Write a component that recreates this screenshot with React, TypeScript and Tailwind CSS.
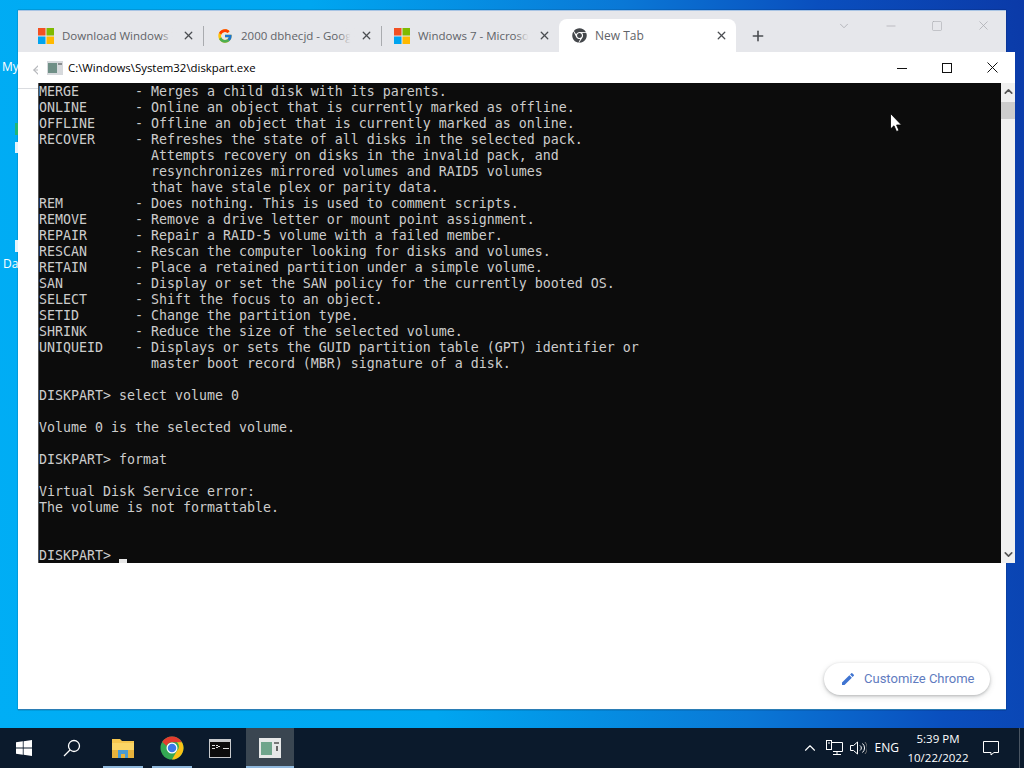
import { FcGoogle } from 'react-icons/fc'
import { FaChrome } from 'react-icons/fa'
import { MdEdit } from 'react-icons/md'
import { X, Plus, ChevronDown, Minus, Square, ChevronUp, ArrowLeft } from 'lucide-react'

const consoleLines = [
  'MERGE       - Merges a child disk with its parents.',
  'ONLINE      - Online an object that is currently marked as offline.',
  'OFFLINE     - Offline an object that is currently marked as online.',
  'RECOVER     - Refreshes the state of all disks in the selected pack.',
  '              Attempts recovery on disks in the invalid pack, and',
  '              resynchronizes mirrored volumes and RAID5 volumes',
  '              that have stale plex or parity data.',
  'REM         - Does nothing. This is used to comment scripts.',
  'REMOVE      - Remove a drive letter or mount point assignment.',
  'REPAIR      - Repair a RAID-5 volume with a failed member.',
  'RESCAN      - Rescan the computer looking for disks and volumes.',
  'RETAIN      - Place a retained partition under a simple volume.',
  'SAN         - Display or set the SAN policy for the currently booted OS.',
  'SELECT      - Shift the focus to an object.',
  'SETID       - Change the partition type.',
  'SHRINK      - Reduce the size of the selected volume.',
  'UNIQUEID    - Displays or sets the GUID partition table (GPT) identifier or',
  '              master boot record (MBR) signature of a disk.',
  '',
  'DISKPART> select volume 0',
  '',
  'Volume 0 is the selected volume.',
  '',
  'DISKPART> format',
  '',
  'Virtual Disk Service error:',
  'The volume is not formattable.',
  '',
  '',
]

function MsLogo() {
  return (
    <svg width="16" height="16" viewBox="0 0 16 16" className="shrink-0">
      <rect width="7.500" height="7.500" fill="#f25022" />
      <rect x="8.500" width="7.500" height="7.500" fill="#7fba00" />
      <rect y="8.500" width="7.500" height="7.500" fill="#00a4ef" />
      <rect x="8.500" y="8.500" width="7.500" height="7.500" fill="#ffb900" />
    </svg>
  )
}

function ChromeLogo({ size }: { size: number }) {
  return (
    <svg width={size} height={size} viewBox="0 0 48 48">
      <circle cx="24" cy="24" r="23" fill="#34a853" />
      <path d="M24 1a23 23 0 0 1 19.900 11.500H24a11.500 11.500 0 0 0-10.800 7.500L4.500 12A23 23 0 0 1 24 1z" fill="#e33b2e" />
      <path d="M43.900 12.500A23 23 0 0 1 24 47l10-17.300a11.500 11.500 0 0 0 0-17.200z" fill="#fbc116" />
      <circle cx="24" cy="24" r="11" fill="#fff" />
      <circle cx="24" cy="24" r="8.500" fill="#3b78e7" />
    </svg>
  )
}

function Tab({ icon, title, className, active }: { icon: React.ReactNode; title: string; className: string; active?: boolean }) {
  return (
    <div className={`relative flex h-[33px] items-center pr-[8px] ${className} ${active ? 'rounded-t-[8px] bg-white' : ''}`}>
      <span className="flex w-[16px] shrink-0 items-center justify-center">{icon}</span>
      <span className={`relative ml-[8px] min-w-0 flex-1 overflow-hidden whitespace-nowrap text-[#5f6368] ${active ? 'text-[12px]' : 'text-[11.500px]'}`}>
        {title}
        {!active && <span className="absolute inset-y-0 right-0 w-[18px] bg-gradient-to-r from-transparent to-[#e6e7eb] to-70%" />}
      </span>
      <X size={13} strokeWidth={2.4} className="ml-[4px] shrink-0 text-[#4a4d51]" />
    </div>
  )
}

function Separator() {
  return <div className="h-[20px] w-px shrink-0 bg-[#a9abaf]" />
}

function ChromeWindow() {
  return (
    <div className="flex h-[700px] w-[988px] flex-col border-y border-t-[#a8c4e4] border-b-[#2b7db5] bg-white font-['Open_Sans',sans-serif] shadow-[0_0_1px_rgba(0,0,0,0.6)]">
      <div className="relative flex h-[41px] shrink-0 items-end bg-[#e6e7eb] pl-[18px]">
        <div className="flex h-[33px] items-center">
          <Tab icon={<MsLogo />} title="Download Windows 7" className="w-[167px] pl-[2px]" />
          <Separator />
          <Tab icon={<FcGoogle size={16} />} title="2000 dbhecjd - Google" className="w-[177px] pl-[13px]" />
          <Separator />
          <Tab icon={<MsLogo />} title="Windows 7 - Microsoft" className="w-[177px] pl-[12px]" />
          <Tab icon={<FaChrome size={15} className="text-[#44474b]" />} title="New Tab" className="w-[177px] pl-[12px]" active />
          <Plus size={16} strokeWidth={2.4} className="ml-[14px] text-[#4a4d51]" />
        </div>
        <div className="absolute right-[15px] top-[7px] flex items-center gap-[33px] text-[#a9abb0]">
          <ChevronDown size={14} strokeWidth={1.4} />
          <Minus size={14} strokeWidth={1.2} />
          <Square size={12} strokeWidth={1.2} />
          <X size={15} strokeWidth={1.2} />
        </div>
      </div>
      <div className="flex h-[37px] shrink-0 items-center border-b border-[#dadce0] pl-[13px]">
        <ArrowLeft size={14} className="text-[#b6b8bc]" />
      </div>
      <div className="flex flex-1 items-end justify-end pb-[14px] pr-[16px]">
        <div className="flex h-[32px] w-[166px] items-center gap-[8px] rounded-full bg-white pl-[16px] shadow-[0_1px_3px_rgba(60,64,67,0.3),0_2px_6px_rgba(60,64,67,0.15)]">
          <MdEdit size={16} className="text-[#3f74d1]" />
          <span className="font-['Roboto',sans-serif] text-[13px] text-[#5f7cbf]">Customize Chrome</span>
        </div>
      </div>
    </div>
  )
}

function ConsoleWindow() {
  return (
    <div className="absolute left-[38px] top-[52px] flex h-[511px] w-[977px] flex-col bg-white">
      <div className="flex h-[31px] shrink-0 items-center pl-[9px]">
        <svg width="16" height="16" viewBox="0 0 16 16">
          <rect x="0" y="1" width="16" height="14" fill="#d6d9dc" />
          <rect x="1" y="3" width="9" height="10" fill="#6f8f86" />
          <rect x="11" y="3" width="4" height="2" fill="#8a8d90" />
        </svg>
        <span className="ml-[5px] font-['Open_Sans',sans-serif] text-[11.400px] text-black">C:\Windows\System32\diskpart.exe</span>
        <div className="ml-auto flex items-center gap-[35px] pr-[17px]">
          <svg width="10" height="10" viewBox="0 0 10 10"><path d="M0 5.500H10" stroke="#111" /></svg>
          <svg width="10" height="10" viewBox="0 0 10 10"><rect x=".5" y=".5" width="9" height="9" fill="none" stroke="#111" /></svg>
          <svg width="11" height="11" viewBox="0 0 11 11"><path d="M.5.500l10 10M10.500.500l-10 10" stroke="#111" /></svg>
        </div>
      </div>
      <div className="flex min-h-0 flex-1 border-l border-[#555]">
        <div className="flex-1 overflow-hidden bg-[#0c0c0c] pt-[1px] font-['DejaVu_Sans_Mono',monospace] text-[13.290px] leading-[16px] text-[#cccccc]">
          {consoleLines.map((line, i) => (
            <div key={i} className="h-[16px] whitespace-pre">{line}</div>
          ))}
          <div className="relative h-[16px] whitespace-pre">
            DISKPART&gt; <span className="absolute left-[80px] top-[11px] h-[4px] w-[8px] bg-[#e8e8e8]" />
          </div>
        </div>
        <div className="flex w-[14px] shrink-0 flex-col items-center bg-[#f0f0f0]">
          <ChevronUp size={13} strokeWidth={3} className="mt-[2px] text-[#555]" />
          <div className="mt-[4px] h-[17px] w-full bg-[#cdcdcd]" />
          <ChevronDown size={13} strokeWidth={3} className="mb-[2px] mt-auto text-[#555]" />
        </div>
      </div>
    </div>
  )
}

function TaskIcon({ children, running, active, className = '' }: { children: React.ReactNode; running?: boolean; active?: boolean; className?: string }) {
  return (
    <div className={`relative flex h-[40px] w-[48px] shrink-0 items-center justify-center ${active ? 'bg-[#3a4651]' : ''} ${className}`}>
      {children}
      {running && <span className={`absolute bottom-0 h-[2px] bg-[#8fb8dc] ${active ? 'inset-x-0' : 'inset-x-[4px]'}`} />}
    </div>
  )
}

function Taskbar() {
  return (
    <div className="flex h-[40px] shrink-0 items-center bg-[#0b1a2c] font-['Open_Sans',sans-serif] text-white">
      <TaskIcon>
        <svg width="16" height="16" viewBox="0 0 16 16" fill="#fff">
          <path d="M0 2.300 6.800 1.300V7.600H0zM7.600 1.200 16 0V7.600H7.600zM0 8.400H6.800V14.700L0 13.700zM7.600 8.400H16V16L7.600 14.800z" />
        </svg>
      </TaskIcon>
      <TaskIcon>
        <svg width="18" height="18" viewBox="0 0 18 18" fill="none" stroke="#fff" strokeWidth="1.300">
          <circle cx="11" cy="7" r="5.500" />
          <path d="M7 11 1 17" />
        </svg>
      </TaskIcon>
      <TaskIcon running className="ml-[3px]">
        <svg width="22" height="19" viewBox="0 0 22 19">
          <path d="M0 0h8l2 2h12v15H0z" fill="#f6c64e" />
          <rect x="0" y="4" width="22" height="15" fill="#fbd566" />
          <rect x="0" y="11" width="22" height="8" fill="#e8b33c" />
          <path d="M6 19v-8h10v8h-3v-4H9v4z" fill="#4a9bd4" />
        </svg>
      </TaskIcon>
      <TaskIcon running className="ml-[1px]">
        <ChromeLogo size={24} />
      </TaskIcon>
      <TaskIcon>
        <svg width="22" height="19" viewBox="0 0 22 19">
          <rect width="22" height="19" fill="#c8cacc" />
          <rect x="1" y="3" width="20" height="15" fill="#0c0c0c" />
          <path d="M3 6h3v1H3zM3 9h3v1H3zM7 6h2v1H7zM9 7h2v1H9zM7 8h2v1H7zM14 9h6v1h-6z" fill="#ddd" />
        </svg>
      </TaskIcon>
      <TaskIcon running active className="ml-[2px]">
        <svg width="22" height="20" viewBox="0 0 22 20">
          <rect width="22" height="20" fill="#e6e8e8" />
          <rect x="2" y="4" width="11" height="13" fill="#6fa58c" />
          <rect x="15" y="4" width="5" height="2" fill="#777" />
          <rect x="17" y="8" width="2" height="5" fill="#666" />
        </svg>
      </TaskIcon>
      <div className="ml-auto flex h-full items-center">
        <ChevronUp size={18} strokeWidth={1.500} className="mr-[7px]" />
        <svg width="17" height="16" viewBox="0 0 17 16" fill="none" stroke="#fff" className="mr-[7px]">
          <path d="M4.500 2.500H16.500V11.500H7M11 11.500V14.500M7 14.500H15" />
          <rect x=".5" y=".5" width="5" height="9" fill="#0b1a2c" />
          <path d="M2 3h2" />
        </svg>
        <svg width="17" height="14" viewBox="0 0 17 14" fill="none" stroke="#fff" className="mr-[8px]">
          <path d="M.5 4.500H3.500L7.500 1V13L3.500 9.500H.5zM10 4.500a3 3 0 0 1 0 5M12.500 2.500a6 6 0 0 1 0 9" />
          <path d="M15 1a9 9 0 0 1 0 12" stroke="#777" />
        </svg>
        <span className="mr-[8px] text-[12px]">ENG</span>
        <div className="flex w-[62px] flex-col items-center text-[11.500px] leading-[19px]">
          <span>5:39 PM</span>
          <span className="whitespace-nowrap">10/22/2022</span>
        </div>
        <svg width="16" height="16" viewBox="0 0 16 16" fill="none" stroke="#fff" className="ml-[14px]">
          <path d="M.5 1.500H15.500V12.500H11L8 15 8 12.500H.5z" />
        </svg>
        <div className="ml-[20px] mr-[4px] h-full w-px bg-[#4a5562]" />
      </div>
    </div>
  )
}

function MouseCursor() {
  return (
    <svg width="12" height="19" viewBox="0 0 12 19" className="absolute left-[890px] top-[113px]">
      <path d="M.5.500V16L4 12.800 6.500 18.500 9 17.500 6.600 12H11.500z" fill="#fff" stroke="#000" strokeWidth=".8" />
    </svg>
  )
}

export default function App() {
  return (
    <div className="relative flex h-[768px] w-[1024px] flex-col overflow-hidden">
      <div className="relative flex-1 bg-[linear-gradient(80deg,#00aef5_0%,#00a6f0_38%,#0a78d6_65%,#0a4fbe_82%,#0b3aa8_100%)] pl-[18px] pt-[10px]">
        <ChromeWindow />
        <span className="absolute left-[2px] top-[58px] font-['Open_Sans',sans-serif] text-[12px] text-white">My</span>
        <span className="absolute left-[15px] top-[123px] h-[12px] w-[3px] bg-[#22b573]" />
        <span className="absolute left-[15px] top-[142px] h-[11px] w-[3px] bg-[#e6f4fb]" />
        <span className="absolute left-[15px] top-[240px] h-[12px] w-[3px] bg-[#e6f4fb]" />
        <span className="absolute left-[3px] top-[255px] font-['Open_Sans',sans-serif] text-[12px] text-white">Da</span>
      </div>
      <Taskbar />
      <ConsoleWindow />
      <MouseCursor />
    </div>
  )
}
